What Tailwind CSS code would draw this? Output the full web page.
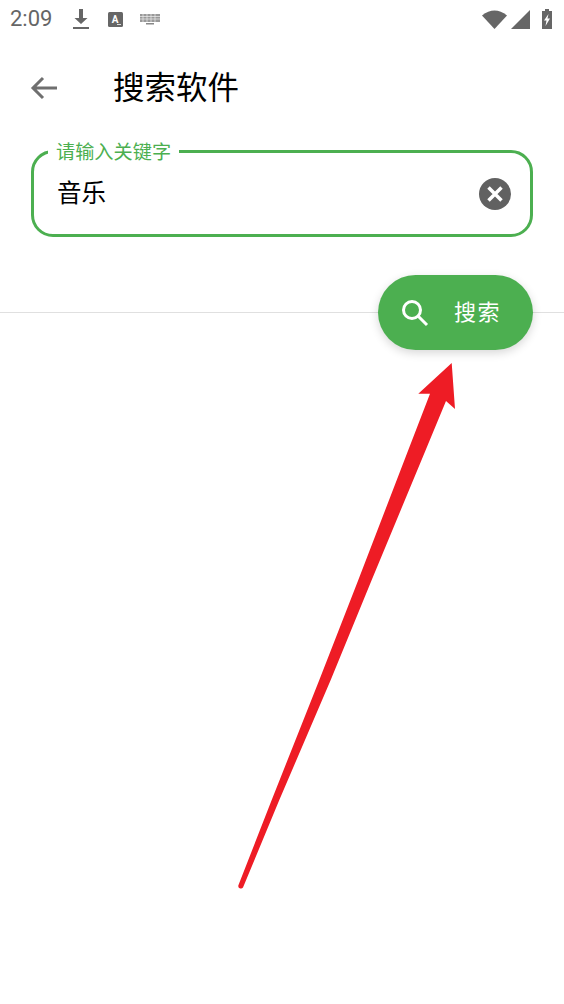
<!DOCTYPE html>
<html><head><meta charset="utf-8">
<script src="https://cdn.jsdelivr.net/npm/@tailwindcss/browser@4"></script>
</head>
<body class="bg-white">
<div class="relative w-[564px] h-[1004px] overflow-hidden bg-white font-['Roboto','Noto_Sans_CJK_SC',sans-serif]">
  <div class="h-[38px] flex items-center pl-[10px] pr-[11px] text-[#666]">
    <span class="text-[22px] leading-none w-[62px]">2:09</span>
    <svg class="w-[18px] h-[22px]" viewBox="0 0 18 22"><path fill="#666" d="M7 1h4v9h4.500L9 16 2.500 10H7z"/><rect x="1" y="19" width="16" height="2" fill="#666"/></svg>
    <svg class="w-[15px] h-[15px] ml-[18px]" viewBox="0 0 15 15"><rect width="15" height="15" rx="1.500" fill="#666"/><text x="7" y="10.500" font-size="10" font-weight="700" fill="#fff" text-anchor="middle" font-family="Roboto">A</text><rect x="9" y="12" width="4" height="1" fill="#ddd"/></svg>
    <svg class="w-[20px] h-[11px] ml-[17px]" viewBox="0 0 20 11"><rect width="20" height="8" fill="#999"/><path stroke="#eee" stroke-width=".7" d="M0 2.500h20M0 5h20M3 0v8M7 0v8M11 0v8M15 0v8"/><rect x="6" y="9" width="8" height="1.500" fill="#888"/></svg>
    <div class="ml-auto flex items-center">
      <svg class="w-[25px] h-[19px]" viewBox="0 0 25 19"><path fill="#666" d="M0 5.500Q12.500 -4.500 25 5.500L12.500 19z"/></svg>
      <svg class="w-[19px] h-[19px] ml-[4px]" viewBox="0 0 19 19"><path fill="#666" d="M19 0v19H0z"/></svg>
      <svg class="w-[12px] h-[20px] ml-[11px]" viewBox="0 0 12 20"><path fill="#666" d="M4 0h4v2h3v18H1V2h3z"/><path fill="#fff" d="M7.500 5 3 11.500h2.500L4.500 17 9 9.500H6.500z"/></svg>
    </div>
  </div>
  <header class="h-[100px] flex items-center">
    <svg class="ml-[29px] w-[30px] h-[30px]" viewBox="0 0 30 30"><path fill="none" stroke="#6f6f6f" stroke-width="3" d="M28 15H4M14 5 4 15l10 10"/></svg>
    <h1 class="ml-[54px] mt-[2px] text-[31.5px] leading-none font-normal text-black">搜索软件</h1>
  </header>
  <div class="relative mx-[31px] mt-[12px] h-[87px] rounded-[22px] border-[3px] border-[#4caf50] flex items-center pl-[23px] pr-[19px]">
    <span class="absolute -top-[11px] left-[14px] bg-white px-[8px] text-[19.2px] leading-[22px] text-[#4caf50]">请输入关键字</span>
    <span class="mt-[2px] text-[24.5px] leading-none text-black">音乐</span>
    <svg class="ml-auto w-[32px] h-[32px]" viewBox="0 0 32 32"><circle cx="16" cy="16" r="16" fill="#616161"/><path stroke="#fff" stroke-width="3.500" d="M9.500 9.500l13 13M22.500 9.500l-13 13"/></svg>
  </div>
  <div class="mt-[75px] h-px bg-[#e0e0e0]"></div>
  <button class="absolute left-[378px] top-[275px] w-[155px] h-[75px] rounded-[37.5px] bg-[#4caf50] shadow-[0_3px_10px_rgba(0,0,0,0.16)] flex items-center pl-[22px] text-white">
    <svg class="w-[30px] h-[30px]" viewBox="0 0 30 30"><circle cx="12" cy="12" r="8.500" fill="none" stroke="#fff" stroke-width="3"/><path stroke="#fff" stroke-width="3" d="M18 18l9 9"/></svg>
    <span class="ml-[24px] text-[22px] leading-none tracking-[1.5px]">搜索</span>
  </button>
  <svg class="absolute left-0 top-0 pointer-events-none" width="564" height="1004" viewBox="0 0 564 1004">
    <path fill="#ee1c25" d="M451.700 363 L418.300 393.700 L430 393.700 L408.300 450 L358.300 580 L319.300 680 L271.700 800 L238.500 885 A2.600 2.600 0 0 0 243 887.500 L279.300 800 L330.700 680 L371.700 580 L425.700 450 L446 401 L455 409 Z"/>
  </svg>
</div>
</body></html>
